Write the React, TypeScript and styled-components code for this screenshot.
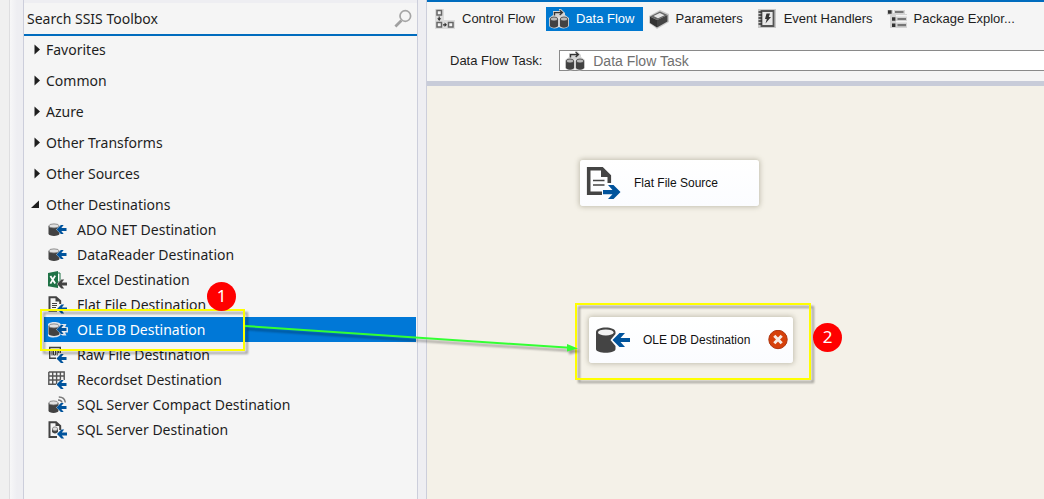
import React from "react";
import styled, { createGlobalStyle } from "styled-components";

const GlobalStyle = createGlobalStyle`
  *, *::before, *::after { box-sizing: border-box; }
  html, body, #root { height: 100%; }
  body { margin: 0; overflow: hidden; background: #eeeef2; }
  button, input, select { font: inherit; color: inherit; border: 0; margin: 0; padding: 0; background: none; }
`;

const uiFont = `"Noto Sans", "Open Sans", sans-serif`;
const designerFont = `"Liberation Sans", Arial, sans-serif`;

const Window = styled.div`
  position: relative;
  display: flex;
  height: 100%;
  min-height: 460px;
  color: #1e1e1e;
`;

const Gutter = styled.div`
  flex: none;
  width: 23px;
  background: linear-gradient(to right, #f0f0f0 9px, #dedee0 9px, #dedee0 10px, #f7f7f8 10px, #eeeef2 17px);
`;

const Toolbox = styled.aside`
  flex: none;
  width: 395px;
  padding-top: 3px;
  border: solid #cccedb;
  border-width: 0 1px;
  background: linear-gradient(#eeeef2 3px, #f5f5f5 3px);
  font: 14px/25px ${uiFont};
`;

const SearchBar = styled.label`
  display: flex;
  align-items: center;
  height: 33px;
  padding: 0 4px 0 3px;
  border-bottom: 2px solid #006cbe;
`;

const SearchInput = styled.input`
  flex: 1;
  min-width: 0;
  outline: 0;
  &::placeholder { color: #1e1e1e; opacity: 1; }
`;

const Tree = styled.div`
  display: flex;
  flex-direction: column;
  gap: 6px;
  padding-top: 1px;
`;

const GroupHeader = styled.button`
  display: flex;
  align-items: center;
  gap: 5px;
  width: 100%;
  height: 25px;
  padding-left: 7px;
  text-align: left;
`;

const ItemList = styled.ul`
  margin: 0;
  padding: 0 1px 0 20px;
  list-style: none;
`;

const Item = styled.button<{ $selected?: boolean }>`
  display: flex;
  align-items: center;
  gap: 9px;
  width: 100%;
  height: 25px;
  padding-left: 4px;
  text-align: left;
  white-space: nowrap;
  color: ${(p) => (p.$selected ? "#fff" : "inherit")};
  background: ${(p) => (p.$selected ? "#0078d7" : "transparent")};
`;

const Designer = styled.main`
  display: flex;
  flex: 1;
  flex-direction: column;
  min-width: 0;
  margin-left: 8px;
  border-left: 1px solid #cccedb;
  background: #f5f5f5;
  font: 13px/16px ${designerFont};
`;

const Tabs = styled.nav`
  display: flex;
  flex: none;
  gap: 3px;
  height: 31px;
  padding: 5px 0 0 5px;
  border-top: 2px solid #006cbe;
  overflow: hidden;
`;

const Tab = styled.button<{ $active?: boolean }>`
  display: flex;
  flex: none;
  align-items: center;
  gap: 7px;
  height: 24px;
  padding: 0 8px 0 3px;
  white-space: nowrap;
  color: ${(p) => (p.$active ? "#fff" : "#1e1e1e")};
  background: ${(p) => (p.$active ? "#0078d0" : "transparent")};
`;

const TaskBar = styled.label`
  display: flex;
  flex: none;
  align-items: center;
  gap: 17px;
  height: 55px;
  padding: 19px 0 10px 23px;
  border-bottom: 5px solid #c8ccd9;
  white-space: nowrap;
`;

const Picker = styled.span`
  display: flex;
  flex: 1;
  align-items: center;
  gap: 8px;
  height: 21px;
  padding-left: 5px;
  border: solid #8a8a8a;
  border-width: 1px 0 1px 1px;
  background: #fff;
  color: #707070;
  font-size: 14px;
`;

const PickerSelect = styled.select`
  flex: 1;
  min-width: 0;
  appearance: none;
  outline: 0;
`;

const Canvas = styled.section`
  position: relative;
  flex: 1;
  background: #f4f1e8;
`;

const Node = styled.div<{ $x: number; $y: number; $width: number }>`
  position: absolute;
  left: ${(p) => p.$x}px;
  top: ${(p) => p.$y}px;
  display: flex;
  align-items: center;
  gap: 12px;
  width: ${(p) => p.$width}px;
  height: 46px;
  padding: 0 5px 0 6px;
  border-radius: 3px;
  background: linear-gradient(#fff, #fbfcff);
  box-shadow: 0 0 5px 1px rgba(120, 115, 90, 0.4);
  color: #111;
  font-size: 12px;
`;

const NodeName = styled.span`
  flex: 1;
  white-space: nowrap;
`;

const Highlight = styled.div<{ $x: number; $y: number; $width: number; $height: number }>`
  position: absolute;
  left: ${(p) => p.$x}px;
  top: ${(p) => p.$y}px;
  width: ${(p) => p.$width}px;
  height: ${(p) => p.$height}px;
  border: 2px solid #ff0;
  filter: drop-shadow(3px 3px 1px rgba(0, 0, 0, 0.35));
  pointer-events: none;
`;

const Step = styled.span<{ $x: number; $y: number }>`
  position: absolute;
  left: ${(p) => p.$x}px;
  top: ${(p) => p.$y}px;
  width: 29px;
  height: 29px;
  border-radius: 50%;
  background: #f00;
  color: #fff;
  font: 17px/28px ${uiFont};
  text-align: center;
`;

const Arrow = styled.svg`
  position: absolute;
  left: 240px;
  top: 318px;
  overflow: visible;
  filter: drop-shadow(2px 3px 1px rgba(0, 0, 0, 0.35));
  pointer-events: none;
`;

const Icon = styled.svg`
  display: block;
  flex: none;
`;

const INK = "#424242";
const BLUE = "#00539c";

const SmallArrow = ({ x = 9, y = 8, color = BLUE }: { x?: number; y?: number; color?: string }) => (
  <path
    transform={`translate(${x} ${y})`}
    d="M0 4.5 4.4 0H7.2L4.8 2.9H10V6.1H4.8L7.2 9H4.4Z"
    fill={color}
    stroke="#f5f5f5"
    strokeWidth=".8"
    paintOrder="stroke"
  />
);

const Drum = ({ x = 0, y = 0, w = 10, h = 13, lid = "#e0e0e0", rim = "#777" }) => (
  <g transform={`translate(${x} ${y})`}>
    <path d={`M0 2.4V${h - 2.2}C0 ${h + 0.6} ${w} ${h + 0.6} ${w} ${h - 2.2}V2.4Z`} fill={INK} />
    <ellipse cx={w / 2} cy="2.4" rx={w / 2 - 0.4} ry="2" fill={lid} stroke={rim} strokeWidth=".8" />
  </g>
);

const DatabaseIcon = ({ selected }: { selected?: boolean }) => (
  <Icon width="20" height="18" viewBox="0 0 20 18">
    {selected && (
      <path
        d="M-1 5C-1 0 13 0 13 4L14.5 3H18.5L17 6.2H20V11.5H17L18.5 14.5H14.5L12.5 13C12.5 17.5-1 17.5-1 13Z"
        fill="#dfe5ec"
      />
    )}
    <Drum x={0.5} y={2.5} w={11} h={12.5} />
    <SmallArrow x={8.5} y={4} />
  </Icon>
);

const ExcelIcon = () => (
  <Icon width="20" height="18" viewBox="0 0 20 18">
    <path d="M0 2 10 0V17L0 15.2Z" fill="#1f7246" />
    <path d="M10 2H12V11H10" fill="#fff" stroke="#1f7246" />
    <path d="m2.4 5 4.8 7.4M7.2 4.6 2.4 12.6" stroke="#fff" strokeWidth="1.8" />
    <SmallArrow x={9} y={8.5} color={INK} />
  </Icon>
);

const FileIcon = () => (
  <Icon width="20" height="18" viewBox="0 0 20 18">
    <path d="M9 14.8H1.5V1.2H8L12.2 5V8" fill="#f5f5f5" stroke={INK} strokeWidth="2" />
    <path d="M7.5 1V5.5H12Z" fill={INK} />
    <path d="M4 7.5H9M4 9.5H9M4 11.5H8" stroke={INK} strokeWidth="1" />
    <SmallArrow x={9} y={8.5} />
  </Icon>
);

const RawFileIcon = () => (
  <Icon width="20" height="18" viewBox="0 0 20 18">
    <path d="M8 12.2H1.7V1.5H12.3V7" fill="none" stroke={INK} strokeWidth="1.4" />
    <path d="M4 4V9.5M5.5 4.5H7.5V9H5.5ZM9.2 4V9.5M10.6 4V7" fill="none" stroke={INK} strokeWidth="1" />
    <SmallArrow x={8.5} y={8} />
  </Icon>
);

const RecordsetIcon = () => (
  <Icon width="20" height="18" viewBox="0 0 20 18">
    <path
      d="M.8 1H16.2V9M.8 1V13.2H8M.8 5H16.2M.8 9H12M4.7 1V13M8.6 1V13M12.4 1V9"
      fill="none"
      stroke="#555"
      strokeWidth="1.4"
    />
    <SmallArrow x={8.5} y={9} />
  </Icon>
);

const CompactIcon = () => (
  <Icon width="20" height="18" viewBox="0 0 20 18">
    <Drum x={0.5} y={4.5} w={10} h={12.5} />
    <path d="M10 4C12.5 4 14 5.5 14.2 7.5M10.8 1C15 1 17 3.5 17.3 6.5" fill="none" stroke="#777" strokeWidth="1.4" />
    <SmallArrow x={8.5} y={7} />
  </Icon>
);

const SqlServerIcon = () => (
  <Icon width="20" height="18" viewBox="0 0 20 18">
    <path d="M9 16H1.5V1.2H8L12.2 5V9" fill="#f5f5f5" stroke={INK} strokeWidth="2" />
    <path d="M7.5 1V5H12Z" fill={INK} />
    <Drum x={4} y={5.5} w={6} h={7} />
    <SmallArrow x={9} y={8.5} />
  </Icon>
);

const SearchIcon = () => (
  <Icon width="20" height="20" viewBox="0 0 20 20" fill="none">
    <circle cx="12.3" cy="7" r="5.3" stroke="#a5a5a5" strokeWidth="1.7" />
    <path d="m8.4 11.4-6 6" stroke="#a0a0a0" strokeWidth="2.8" />
  </Icon>
);

const CollapsedIcon = () => (
  <Icon width="10" height="12" viewBox="0 0 10 12">
    <path d="M3.5 0.5 9 5.5 3.5 10.5Z" fill="#1e1e1e" />
  </Icon>
);

const ExpandedIcon = () => (
  <Icon width="10" height="12" viewBox="0 0 10 12">
    <path d="M8 1.5V9H0Z" fill="#1e1e1e" />
  </Icon>
);

const ControlFlowIcon = () => (
  <Icon width="20" height="20" viewBox="0 0 20 20" fill="none">
    <path d="M0 0H9V11H20V20H0Z" fill="#dcdcdc" />
    <path d="M2 1.5H6.5V6H2ZM2 13.5H6.5V18H2ZM13.5 13.5H18V18H13.5Z" fill="#f5f5f5" stroke="#666" strokeWidth="1.5" />
    <path d="M4.2 7.5V11M8 15.8H11" stroke="#333" strokeWidth="1.2" />
    <path d="M2.2 9.2H6.2L4.2 11.9ZM9.6 13.6V18L12 15.8Z" fill="#333" />
  </Icon>
);

const DataFlowIcon = () => (
  <Icon width="20" height="20" viewBox="0 0 20 20">
    <path d="M4 2H10V0H12L16 4V6L20 9V17C18 20 12 20 10 18 8 20 2 20 0 17V9L4 6Z" fill="#d4d4d4" />
    <path d="M9.6 8H10.4V18H9.6Z" fill="#f5f5f5" />
    <Drum x={0.9} y={7.6} w={8.2} h={11.2} lid="#b9b9b9" rim="#3c3c3c" />
    <Drum x={10.9} y={7.6} w={8.2} h={11.2} lid="#b9b9b9" rim="#3c3c3c" />
    <path d="M5.5 6.5V3.6H13M10.7 1.2 13.4 3.6 10.7 6.1" fill="none" stroke="#333" strokeWidth="1.4" />
  </Icon>
);

const ParametersIcon = () => (
  <Icon width="20" height="20" viewBox="0 0 20 20">
    <path d="M0 7 11 1 20 5V13L8 20 0 14Z" fill="#c9c9c9" />
    <path d="M1 7.5 8 11V18.5L1 14Z" fill="#333" />
    <path d="M8 11 18.5 6V12.5L8 18.5Z" fill="#444" />
    <path d="M1 7.5 11 2.5 18.5 6 8 11Z" fill="#666" />
    <path d="M4.5 7 10.8 4 15.5 6.2 9 9.2Z" fill="#e6e6e6" />
  </Icon>
);

const EventsIcon = () => (
  <Icon width="20" height="20" viewBox="0 0 20 20">
    <path d="M1 0H19V19H1Z" fill="#c8c8c8" />
    <path d="M4.5 2H16.5V17H4.5Z" fill="#e8e8e8" stroke="#555" strokeWidth="1.8" />
    <path d="M1.5 3H5M1.5 6H5M1.5 9H5M1.5 12H5M1.5 15H5" stroke="#333" strokeWidth="1.4" />
    <path d="M9.5 4.5H13L11.8 8H14L8.5 14.5 9.8 10H8Z" fill="#333" />
  </Icon>
);

const ExplorerIcon = () => (
  <Icon width="20" height="20" viewBox="0 0 20 20">
    <path d="M0 1H18V5H20V19H3V6H0Z" fill="#d4d4d4" />
    <path d="M6 1H7V4H6ZM9 6H20V7.5H9ZM9 12H20V13.5H9Z" fill="#f5f5f5" />
    <path d="M1 1.3H4.6V4.7H1ZM5 8.3H8.4V11.7H5ZM5 14.5H8.4V17.9H5Z" fill="#333" />
    <path d="M8 3H16.5M10.5 10H19M10.5 16.2H19" stroke="#777" strokeWidth="2.2" />
  </Icon>
);

const SourceNodeIcon = () => (
  <Icon width="36" height="36" viewBox="0 0 36 36">
    <path d="M16 28.2H2.7V3.7H16L23.3 11V18" fill="none" stroke="#444" strokeWidth="3.6" />
    <path d="M15 2V12H25Z" fill="#444" />
    <path d="M7 15.5H18.5M7 20H18.5" stroke="#444" strokeWidth="1.7" />
    <path d="M17 25H26.5L22 20H27.5L34.5 27 27.5 34H22L26.5 29.2H17Z" fill="#00539c" />
  </Icon>
);

const DestinationNodeIcon = () => (
  <Icon width="36" height="36" viewBox="0 0 36 36">
    <path d="M1 10C1 4 20.5 4 20.5 10V12L15.5 18 20.5 24V27C20.5 32 1 32 1 27Z" fill="#444" />
    <ellipse cx="10.8" cy="10.4" rx="7.8" ry="3" fill="#f4f4f4" />
    <path d="M17.5 18 24.5 11H30L25.5 16H35V20H25.5L30 25H24.5Z" fill="#00539c" />
  </Icon>
);

const ErrorIcon = () => (
  <Icon width="20" height="20" viewBox="0 0 20 20" role="img" aria-label="Error">
    <circle cx="10" cy="9.5" r="9.2" fill="#d6410b" stroke="#ad3510" />
    <path d="m6.3 5.8 7.4 7.4M13.7 5.8l-7.4 7.4" stroke="#f6ece6" strokeWidth="3" />
  </Icon>
);

const collapsedGroups = ["Favorites", "Common", "Azure", "Other Transforms", "Other Sources"];

const destinations = [
  { name: "ADO NET Destination", icon: <DatabaseIcon /> },
  { name: "DataReader Destination", icon: <DatabaseIcon /> },
  { name: "Excel Destination", icon: <ExcelIcon /> },
  { name: "Flat File Destination", icon: <FileIcon /> },
  { name: "OLE DB Destination", icon: <DatabaseIcon selected />, selected: true },
  { name: "Raw File Destination", icon: <RawFileIcon /> },
  { name: "Recordset Destination", icon: <RecordsetIcon /> },
  { name: "SQL Server Compact Destination", icon: <CompactIcon /> },
  { name: "SQL Server Destination", icon: <SqlServerIcon /> },
];

const tabs = [
  { name: "Control Flow", icon: <ControlFlowIcon /> },
  { name: "Data Flow", icon: <DataFlowIcon />, active: true },
  { name: "Parameters", icon: <ParametersIcon /> },
  { name: "Event Handlers", icon: <EventsIcon /> },
  { name: "Package Explor...", icon: <ExplorerIcon /> },
];

export default function App() {
  return (
    <>
      <GlobalStyle />
      <Window>
        <Gutter />
        <Toolbox>
          <SearchBar>
            <SearchInput type="text" aria-label="Search SSIS Toolbox" placeholder="Search SSIS Toolbox" />
            <SearchIcon />
          </SearchBar>
          <Tree>
            {collapsedGroups.map((name) => (
              <GroupHeader key={name} aria-expanded={false}>
                <CollapsedIcon />
                {name}
              </GroupHeader>
            ))}
            <div>
              <GroupHeader aria-expanded>
                <ExpandedIcon />
                Other Destinations
              </GroupHeader>
              <ItemList>
                {destinations.map((item) => (
                  <li key={item.name}>
                    <Item $selected={item.selected}>
                      {item.icon}
                      {item.name}
                    </Item>
                  </li>
                ))}
              </ItemList>
            </div>
          </Tree>
        </Toolbox>
        <Designer>
          <Tabs>
            {tabs.map((tab) => (
              <Tab key={tab.name} $active={tab.active}>
                {tab.icon}
                {tab.name}
              </Tab>
            ))}
          </Tabs>
          <TaskBar>
            Data Flow Task:
            <Picker>
              <DataFlowIcon />
              <PickerSelect aria-label="Data Flow Task">
                <option>Data Flow Task</option>
              </PickerSelect>
            </Picker>
          </TaskBar>
          <Canvas>
            <Node $x={153} $y={74} $width={179}>
              <SourceNodeIcon />
              <NodeName>Flat File Source</NodeName>
            </Node>
            <Node $x={162} $y={231} $width={204}>
              <DestinationNodeIcon />
              <NodeName>OLE DB Destination</NodeName>
              <ErrorIcon />
            </Node>
          </Canvas>
        </Designer>
        <Highlight $x={40} $y={309} $width={205} $height={42} />
        <Highlight $x={575} $y={303} $width={236} $height={77} />
        <Arrow width="340" height="40" viewBox="0 0 340 40">
          <path d="M5 8 330 29.8" stroke="#3f3" strokeWidth="2" />
          <path d="M327 26 338 30.5 327 33.5Z" fill="#3f3" />
        </Arrow>
        <Step $x={207} $y={282}>1</Step>
        <Step $x={813} $y={323}>2</Step>
      </Window>
    </>
  );
}
